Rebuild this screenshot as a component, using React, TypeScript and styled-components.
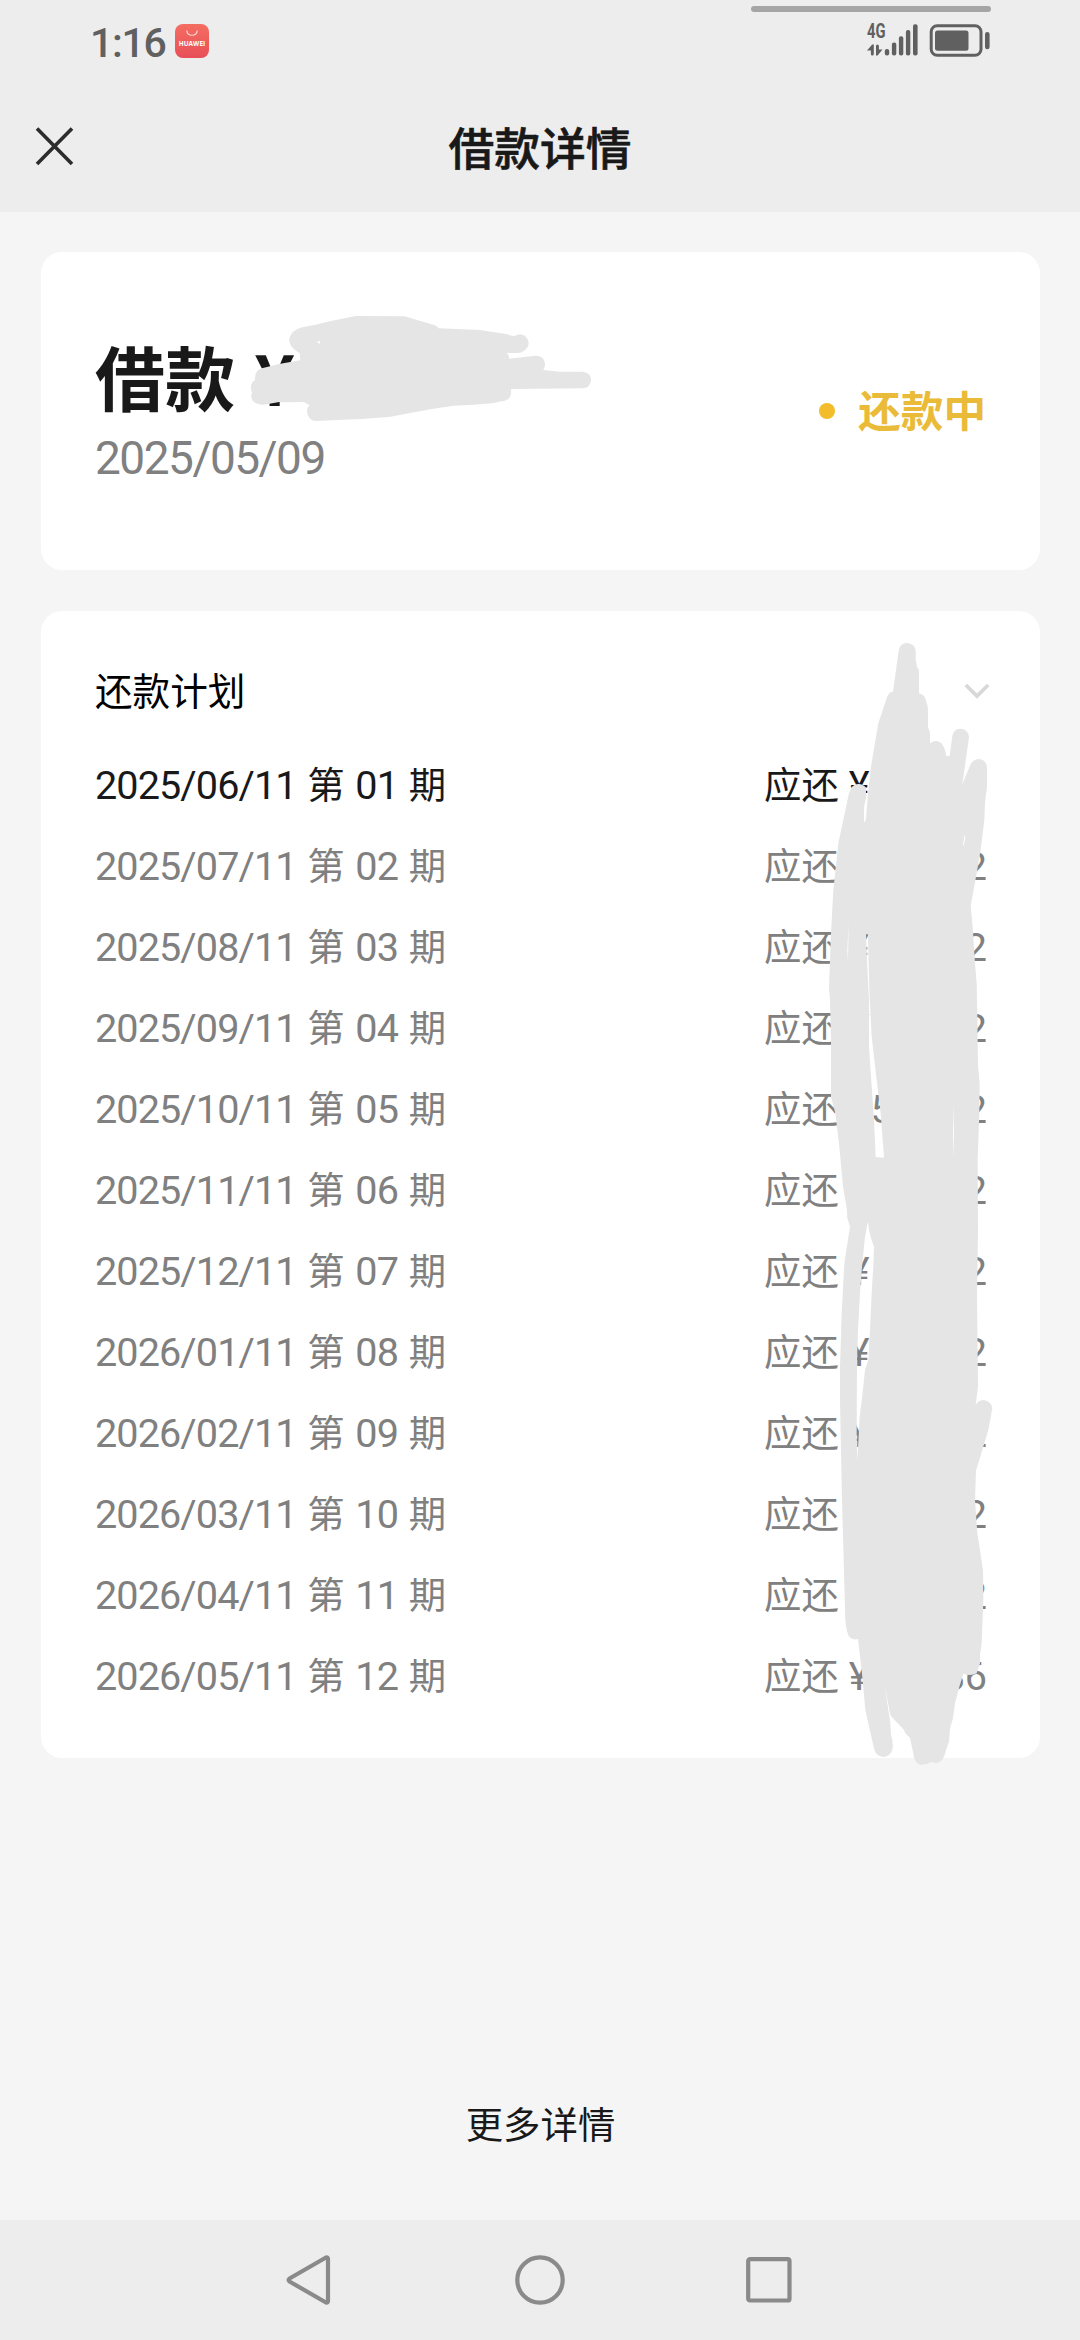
import React from 'react';
import styled, { createGlobalStyle } from 'styled-components';

const GlobalStyle = createGlobalStyle`
  * { box-sizing: border-box; }
  body {
    margin: 0;
    background: #f5f5f5;
    font-family: 'Noto Sans CJK SC', sans-serif;
    -webkit-font-smoothing: antialiased;
  }
`;

const Screen = styled.div`
  width: 1080px;
  height: 2340px;
  display: flex;
  flex-direction: column;
  overflow: hidden;
  background: #f5f5f5;
`;

const Top = styled.header`
  position: relative;
  height: 212px;
  background: #ededed;
`;

const PullHandle = styled.div`
  position: absolute;
  top: 6px;
  left: 751px;
  width: 240px;
  height: 6px;
  border-radius: 3px;
  background: #a5a5a5;
`;

const StatusBar = styled.div`
  height: 82px;
  padding: 0 90px 0 90px;
  display: flex;
  align-items: center;
  justify-content: space-between;
`;

const StatusLeft = styled.div`
  display: flex;
  align-items: center;
  gap: 9px;
`;

const Clock = styled.span`
  width: 76px;
  font: 500 41px/50px Roboto, sans-serif;
  letter-spacing: -1.3px;
  color: #606060;
  padding-top: 4px;
`;

const AppBadge = styled.span`
  width: 34px;
  height: 34px;
  border-radius: 8px;
  background: linear-gradient(#f46d61, #e84f58);
  display: flex;
  flex-direction: column;
  align-items: center;
  padding-top: 6px;
`;

const BadgeName = styled.span`
  margin-top: 3px;
  font: 700 6.4px/8px 'Open Sans', sans-serif;
  letter-spacing: 0.1px;
  color: #fff;
`;

const StatusRight = styled.div`
  display: flex;
  align-items: center;
`;

const TitleBar = styled.div`
  height: 130px;
  padding: 0 34px;
  display: grid;
  grid-template-columns: 42px 1fr 42px;
  align-items: center;
`;

const Title = styled.h1`
  margin: 0;
  padding-bottom: 3px;
  text-align: center;
  font-size: 45.8px;
  line-height: 60px;
  font-weight: 500;
  color: #191919;
  -webkit-text-stroke: 0.6px #191919;
`;

const Content = styled.main`
  flex: 1;
  padding: 40px 40px 0 41px;
  display: flex;
  flex-direction: column;
`;

const Card = styled.section<{ $height: number }>`
  position: relative;
  height: ${(p) => p.$height}px;
  border-radius: 21px;
  background: #fff;
  padding: 0 54px 0 54px;
`;

const Summary = styled.div`
  height: 318px;
  display: flex;
  align-items: center;
  justify-content: space-between;
`;

const SummaryText = styled.div`
  display: flex;
  flex-direction: column;
`;

const LoanTitle = styled.div`
  display: flex;
  gap: 19px;
  font-size: 70px;
  line-height: 84px;
  padding-bottom: 10px;
  font-weight: 700;
  color: #191919;
  white-space: nowrap;
`;

const LoanAmount = styled.span`
  letter-spacing: 8px;
`;

const LoanDate = styled.div`
  font: 400 46px/60px Roboto, sans-serif;
  letter-spacing: -1.5px;
  color: #808080;
`;

const State = styled.div`
  display: flex;
  align-items: center;
  gap: 23px;
  font-size: 42.6px;
  line-height: 60px;
  font-weight: 700;
  color: #eabb38;
`;

const StateName = styled.span`
  padding-bottom: 5px;
`;

const Dot = styled.i`
  width: 16px;
  height: 16px;
  border-radius: 50%;
  background: #f3bc2a;
`;

const PlanHead = styled.div`
  height: 133px;
  padding: 26px 0 0;
  display: flex;
  align-items: center;
  justify-content: space-between;
  font-size: 37.6px;
  line-height: 54px;
  color: #000;

  svg {
    margin-right: -4px;
  }
`;

const PlanTitle = styled.span`
  padding-bottom: 4px;
`;

const PlanRow = styled.div<{ $current: boolean }>`
  height: 81px;
  display: flex;
  align-items: center;
  justify-content: space-between;
  font-size: 37.4px;
  line-height: 56px;
  white-space: nowrap;
  color: ${(p) => (p.$current ? '#191919' : '#808080')};
`;

const Num = styled.span`
  font-family: Roboto, sans-serif;
  font-size: 39.6px;
  letter-spacing: -0.9px;
`;

const Yen = styled(Num)`
  letter-spacing: 1px;
`;

const Period = styled.span`
  word-spacing: 2.3px;
`;

const Due = styled.span`
  display: flex;
  align-items: baseline;
  width: 222px;
`;

const Amount = styled.span`
  flex: 1;
  margin-left: 10px;
  display: flex;
  justify-content: space-between;
  align-items: baseline;
`;

const SummaryMask = styled.svg`
  position: absolute;
  left: -1px;
  top: -12px;
`;

const PlanMask = styled.svg`
  position: absolute;
  left: 699px;
  top: -11px;
`;

const More = styled.div`
  margin-top: auto;
  height: 125px;
  text-align: center;
  font-size: 37.4px;
  line-height: 56px;
  color: #191919;
`;

const NavBar = styled.nav`
  height: 120px;
  background: #ededed;
  display: flex;
  justify-content: center;
  align-items: center;
  gap: 178px;
`;

const Gap = styled.div`
  height: 41px;
`;

const rows = [
  { date: '2025/06/11', no: '01', tail: '' },
  { date: '2025/07/11', no: '02', tail: '2' },
  { date: '2025/08/11', no: '03', tail: '2' },
  { date: '2025/09/11', no: '04', tail: '2' },
  { date: '2025/10/11', no: '05', lead: '5', tail: '2' },
  { date: '2025/11/11', no: '06', tail: '2' },
  { date: '2025/12/11', no: '07', tail: '2' },
  { date: '2026/01/11', no: '08', tail: '2' },
  { date: '2026/02/11', no: '09', tail: '2' },
  { date: '2026/03/11', no: '10', tail: '2' },
  { date: '2026/04/11', no: '11', tail: '2' },
  { date: '2026/05/11', no: '12', tail: '36' },
];

const summaryMask =
  'M720 254 L760 243 L825 228 L952 229 L1030 255 Q1038 258 1042 265 L1150 270 L1222 283 Q1230 289 1240 288 Q1255 278 1268 288 Q1282 305 1274 322 Q1264 338 1250 339 L1220 339 Q1226 346 1226 356 L1295 347 Q1318 347 1320 372 Q1319 385 1315 390 L1358 395 L1418 395 Q1440 398 1440 420 Q1438 443 1420 445 L1231 447 L1231 462 Q1227 483 1205 484 L1187 489 L1134 494 L1080 497 L1020 508 L912 531 L840 537 L720 543 Q700 540 698 515 Q698 500 705 496 L690 486 L640 487 L625 486 L585 494 Q552 493 552 467 L554 457 Q548 440 555 427 L562 420 Q560 390 580 385 L625 372 L680 361 L679 340 Q650 322 651 298 Q657 270 685 262Z M722 305 L731 303 L732 312Z';

const planMask =
  'M459 275 L476 152 Q480 129 501 129 Q525 130 527 154 L527 180 Q530 190 531 202 Q537 205 537 217 L537 280 Q555 284 558 303 Q564 318 564 330 L564 384 Q570 392 570 402 L570 430 Q588 416 604 430 Q618 448 618 467 L629 468 L637 408 Q641 386 662 386 Q685 388 687 412 L667 553 L691 495 Q698 478 716 477 Q740 480 741 504 L741 560 L735 605 L733 660 L722 750 L710 820 L692 918 L698 980 L705 1090 L710 1150 L712 1250 L714 1400 L719 1450 L718 1540 L713 1680 L714 1900 L711 2085 L714 2360 L707 2415 Q715 2400 733 2400 Q755 2405 757 2425 L745 2490 L708 2612 L705 2700 L712 2800 L729 2910 L730 3000 L725 3130 L720 3165 L720 3190 L710 3220 Q690 3230 670 3221 L658 3260 L645 3310 L639 3355 L630 3385 L627 3425 L618 3450 Q612 3485 590 3489 Q580 3489 575 3485 Q555 3497 540 3494 Q525 3488 522 3470 L510 3413 Q495 3402 492 3390 L455 3350 Q450 3345 449 3335 L434 3255 L451 3370 L453 3405 Q460 3425 458 3445 Q453 3468 433 3471 Q410 3470 403 3450 L376 3330 L366 3220 L354 3117 Q342 3122 327 3110 Q318 3090 316 3060 L306 2700 L300 2400 L300 2300 L305 2140 L313 1990 L330 1880 L322 1855 L321 1830 L309 1760 L298 1640 L286 1540 L273 1490 L273 1320 L270 1200 L267 1165 L272 1020 L280 870 L295 730 L327 580 Q335 552 355 552 Q370 553 377 562 L379 590 L372 622 L372 668 L378 658 L383 590 L393 500 L415 370 L440 295 Q445 276 459 275Z' +
  ' M669 735 L674 703 L676 713 L671 738Z M326 970 L322 1050 L324 1085Z' +
  ' M378 1003 L384 1003 L385 1060 L389 1195 L395 1310 L410 1440 L422 1540 L432 1673 L407 1671 L402 1560 L393 1430 L387 1340 L387 1200 L381 1080Z' +
  ' M641 1510 L642 1600 L641 1675 L639 1600Z' +
  ' M384 1864 L387 1890 L393 1915 L402 1940 L400 2000 L396 2060 L390 2190 L385 2280 L375 2310 L366 2395 L359 2450 L352 2585 L350 2500 L351 2280 L354 2190 L360 2080 L366 2000 L375 1910Z';

const StatusIcons = () => (
  <svg width="124" height="54" viewBox="866 14 124 54" fill="#606060">
    <text x="867" y="38.3" fontFamily="Roboto, sans-serif" fontWeight="700" fontSize="20" textLength="18.5" lengthAdjust="spacingAndGlyphs">4G</text>
    <path d="M867 50.5 L872.2 44.5 H873.8 V54 Q873.8 55.5 872.3 55.5 Q870.9 55.5 870.9 54 V50.5Z" />
    <path d="M876 46 Q876 44.5 877.4 44.5 Q878.9 44.5 878.9 46 V49.5 H882.5 L877.6 55.5 H876Z" />
    <rect x="884.8" y="49" width="4.4" height="6.5" rx="2" />
    <rect x="891.9" y="42.5" width="4.4" height="13" rx="2" />
    <rect x="898.9" y="36.3" width="4.4" height="19.2" rx="2" />
    <rect x="905.9" y="30" width="4.4" height="25.5" rx="2" />
    <rect x="913" y="24.3" width="4.6" height="31.2" rx="2" />
    <rect x="931.2" y="25.8" width="49.8" height="29.4" rx="6" fill="none" stroke="#606060" strokeWidth="3" />
    <rect x="935" y="30.5" width="33.5" height="20.3" rx="2.5" />
    <rect x="985" y="32" width="4.6" height="17.2" rx="2.3" />
  </svg>
);

export default function App() {
  return (
    <Screen>
      <GlobalStyle />
      <Top>
        <PullHandle />
        <StatusBar>
          <StatusLeft>
            <Clock>1:16</Clock>
            <AppBadge>
              <svg width="12" height="7" viewBox="0 0 12 7">
                <path d="M0.8 0.5 C1.2 6.8 10.8 6.8 11.2 0.5" fill="none" stroke="#ffd5d0" strokeWidth="1.2" />
              </svg>
              <BadgeName>HUAWEI</BadgeName>
            </AppBadge>
          </StatusLeft>
          <StatusRight>
            <StatusIcons />
          </StatusRight>
        </StatusBar>
        <TitleBar>
          <svg width="40" height="40" viewBox="34 127 40 40">
            <path d="M37 128.5 L72 164 M72 128.5 L37 164" stroke="#2c2c2c" strokeWidth="3.6" />
          </svg>
          <Title>借款详情</Title>
        </TitleBar>
      </Top>
      <Content>
        <Card $height={318}>
          <Summary>
            <SummaryText>
              <LoanTitle>
                <span>借款</span>
                <LoanAmount>¥5</LoanAmount>
              </LoanTitle>
              <LoanDate>2025/05/09</LoanDate>
            </SummaryText>
            <State>
              <Dot />
              <StateName>还款中</StateName>
            </State>
          </Summary>
          <SummaryMask width="600" height="340" viewBox="0 0 1568 1020" preserveAspectRatio="none">
            <path d={summaryMask} fill="#e5e5e5" fillRule="evenodd" />
          </SummaryMask>
        </Card>
        <Gap />
        <Card $height={1147}>
          <PlanHead>
            <PlanTitle>还款计划</PlanTitle>
            <svg width="26" height="16" viewBox="0 0 26 16">
              <path d="M1.8 2 L13 13 L24.2 2" fill="none" stroke="#d8d8d8" strokeWidth="3.8" />
            </svg>
          </PlanHead>
          {rows.map((row, i) => (
            <PlanRow key={row.no} $current={i === 0}>
              <Period>
                <Num>{row.date}</Num> 第 <Num>{row.no}</Num> 期
              </Period>
              <Due>
                应还
                <Amount>
                  <Yen>¥{row.lead}</Yen>
                  <Num>{row.tail}</Num>
                </Amount>
              </Due>
            </PlanRow>
          ))}
          <PlanMask width="340" height="1200" viewBox="0 0 1020 3600" preserveAspectRatio="none">
            <path d={planMask} fill="#e5e5e5" fillRule="evenodd" />
          </PlanMask>
        </Card>
        <More>更多详情</More>
      </Content>
      <NavBar>
        <svg width="54" height="54" viewBox="281 2253 54 54">
          <path d="M289.5 2278.5 L326 2257.5 Q328 2257 328 2259 V2301 Q328 2303 326 2302.5 L289.5 2281.5 Q288 2280 289.5 2278.5Z" fill="none" stroke="#8a8a8a" strokeWidth="4.2" strokeLinejoin="round" />
        </svg>
        <svg width="54" height="54" viewBox="0 0 54 54">
          <circle cx="27" cy="27" r="22.7" fill="none" stroke="#8a8a8a" strokeWidth="4.2" />
        </svg>
        <svg width="54" height="54" viewBox="3 0 54 54">
          <rect x="6.2" y="6.2" width="41.3" height="41.3" rx="1.8" fill="none" stroke="#8a8a8a" strokeWidth="4.2" />
        </svg>
      </NavBar>
    </Screen>
  );
}
